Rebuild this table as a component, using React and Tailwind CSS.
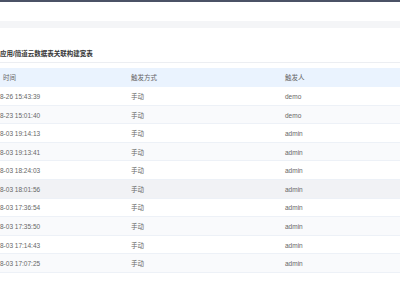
import React from 'react';

// the page is a crop: the left edge of the first column falls outside it
const rows = [
  { time: '8-26 15:43:39', mode: '手动', user: 'demo' },
  { time: '8-23 15:01:40', mode: '手动', user: 'demo' },
  { time: '8-03 19:14:13', mode: '手动', user: 'admin' },
  { time: '8-03 19:13:41', mode: '手动', user: 'admin' },
  { time: '8-03 18:24:03', mode: '手动', user: 'admin' },
  { time: '8-03 18:01:56', mode: '手动', user: 'admin', hover: true },
  { time: '8-03 17:36:54', mode: '手动', user: 'admin' },
  { time: '8-03 17:35:50', mode: '手动', user: 'admin' },
  { time: '8-03 17:14:43', mode: '手动', user: 'admin' },
  { time: '8-03 17:07:25', mode: '手动', user: 'admin' },
];

const App = () => {
  return (
    <div
      className="w-[400px] h-[300px] overflow-hidden bg-white"
      style={{ fontFamily: '"Liberation Sans", "Noto Sans CJK SC", sans-serif' }}
    >
      <div className="h-[2px] bg-[#4b5266]" />
      <div className="h-[19px] bg-white" />
      <div className="h-[7px] bg-[#f4f5f7]" />

      <div>
        {/* title */}
        <div className="h-[35px] pt-[19px] border-b border-[#eceef2]">
          <div className="text-[6.5px] leading-[14px] font-semibold text-[#333]">
            应用/简道云数据表关联构建宽表
          </div>
        </div>

        {/* table */}
        <div className="mt-[5px] text-[6.5px] text-[#666]">
          <div className="flex h-[19px] items-center bg-[#eaf3fe]">
            <div className="w-[131px] pl-[3px]">时间</div>
            <div className="w-[154px]">触发方式</div>
            <div className="flex-1">触发人</div>
          </div>
          {rows.map((r, i) => (
            <div
              key={i}
              className={`flex h-[18.6px] pt-[2px] items-center border-b border-[#edf1f7] ${
                r.hover ? 'bg-[#f1f2f5]' : i % 2 === 1 ? 'bg-[#f9fafc]' : 'bg-white'
              }`}
            >
              <div className="w-[131px]">{r.time}</div>
              <div className="w-[154px]">{r.mode}</div>
              <div className="flex-1">{r.user}</div>
            </div>
          ))}
        </div>
      </div>
    </div>
  );
};

export default App;
